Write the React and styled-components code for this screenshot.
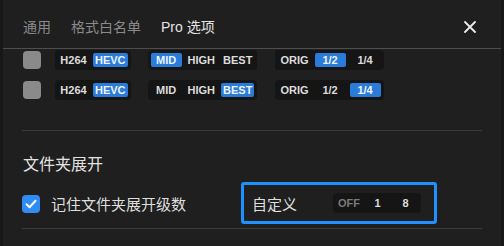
import React from "react";
import styled, { createGlobalStyle } from "styled-components";

const Global = createGlobalStyle`
  html, body { margin: 0; padding: 0; background: #171717; }
  body { font-family: "Liberation Sans", "Noto Sans CJK SC", sans-serif; }
  * { box-sizing: border-box; }
`;

const Page = styled.div`
  width: 504px;
  height: 246px;
  overflow: hidden;
  display: flex;
  padding-left: 3px;
  background: #171717;
`;

const Dialog = styled.div`
  width: 498px;
  height: 246px;
  background: #1f1f1f;
  display: flex;
  flex-direction: column;
  overflow: hidden;
`;

const Header = styled.div`
  height: 49px;
  flex: none;
  display: flex;
  align-items: center;
  padding: 6px 25px 0 20px;
  border-bottom: 1px solid #4e4e4e;
  gap: 20px;
`;

const Tab = styled.div`
  font-size: 14px;
  line-height: 20px;
  color: ${(p) => (p.$active ? "#e4e4e4" : "#8a8a8a")};
`;

const Close = styled.div`
  margin-left: auto;
  width: 12px;
  height: 12px;
  display: flex;
`;

const Content = styled.div`
  padding: 1px 19px 0 19px;
  display: flex;
  flex-direction: column;
`;

const Rows = styled.div`
  display: flex;
  flex-direction: column;
  gap: 10px;
`;

const Row = styled.div`
  height: 20px;
  display: flex;
  align-items: center;
  padding-left: 1px;
`;

const Box = styled.div`
  width: 18px;
  height: 18px;
  border-radius: 4px;
  flex: none;
  background: ${(p) => (p.$checked ? "#2f8cf5" : "#8a8a8a")};
  display: flex;
  align-items: center;
  justify-content: center;
`;

const Group = styled.div`
  display: flex;
  align-items: center;
  gap: ${(p) => p.$gap || 4}px;
  padding: 3px;
  height: 20px;
  background: #151515;
  border-radius: 4px;
  margin-left: ${(p) => p.$ml || 0}px;
`;

const Seg = styled.div`
  min-width: ${(p) => p.$w || 31}px;
  height: 14px;
  padding: 0 2px;
  border-radius: 2px;
  display: flex;
  align-items: center;
  justify-content: center;
  font-size: 11px;
  font-weight: 700;
  color: ${(p) => (p.$active ? "#eef5ff" : p.$dim ? "#7a7a7a" : "#dcdcdc")};
  background: ${(p) => (p.$active ? "#2b7cd8" : "transparent")};
`;

const Divider = styled.div`
  height: 1px;
  background: #3b3b3b;
  margin-top: ${(p) => p.$mt}px;
`;

const SectionTitle = styled.div`
  font-size: 16px;
  line-height: 22px;
  color: #e2e2e2;
  margin-top: 23px;
  padding-left: 1px;
`;

const OptionRow = styled.div`
  display: flex;
  align-items: center;
  margin-top: 6px;
`;

const CheckLabel = styled.label`
  width: 219px;
  display: flex;
  align-items: center;
  gap: 11px;
  font-size: 15px;
  color: #dedede;
  padding-top: 1px;
`;

const Highlight = styled.div`
  width: 196px;
  height: 42px;
  border: 3px solid #1e90ff;
  border-radius: 3px;
  display: flex;
  align-items: center;
  padding: 0 13px 0 8px;
`;

const FieldLabel = styled.span`
  font-size: 15px;
  color: #dedede;
`;

const Push = styled.div`
  margin-left: auto;
`;

const Check = () => (
  <svg width="12" height="10" viewBox="0 0 12 10">
    <path d="M1.5 5.2 L4.6 8.2 L10.5 1.8" fill="none" stroke="#fff" strokeWidth="2" strokeLinecap="round" strokeLinejoin="round" />
  </svg>
);

const X = () => (
  <svg width="12" height="12" viewBox="0 0 12 12">
    <path d="M1 1 L11 11 M11 1 L1 11" stroke="#ececec" strokeWidth="1.8" strokeLinecap="round" />
  </svg>
);

const rows = [
  { codec: 1, quality: 0, scale: 1 },
  { codec: 1, quality: 2, scale: 2 },
];

export default function App() {
  return (
    <>
      <Global />
      <Page>
        <Dialog>
          <Header>
            <Tab>通用</Tab>
            <Tab>格式白名单</Tab>
            <Tab $active>Pro 选项</Tab>
            <Close><X /></Close>
          </Header>
          <Content>
            <Rows>
              {rows.map((r, i) => (
                <Row key={i}>
                  <Box />
                  <Group $ml={14}>
                    {["H264", "HEVC"].map((t, j) => (
                      <Seg key={t} $active={r.codec === j}>{t}</Seg>
                    ))}
                  </Group>
                  <Group $ml={17}>
                    {["MID", "HIGH", "BEST"].map((t, j) => (
                      <Seg key={t} $active={r.quality === j}>{t}</Seg>
                    ))}
                  </Group>
                  <Group $ml={18}>
                    {["ORIG", "1/2", "1/4"].map((t, j) => (
                      <Seg key={t} $active={r.scale === j}>{t}</Seg>
                    ))}
                  </Group>
                </Row>
              ))}
            </Rows>
            <Divider $mt={30} />
            <SectionTitle>文件夹展开</SectionTitle>
            <OptionRow>
              <CheckLabel>
                <Box $checked><Check /></Box>
                记住文件夹展开级数
              </CheckLabel>
              <Highlight>
                <FieldLabel>自定义</FieldLabel>
                <Push>
                  <Group $gap={3}>
                    <Seg $w={25} $dim>OFF</Seg>
                    <Seg $w={25}>1</Seg>
                    <Seg $w={25}>8</Seg>
                  </Group>
                </Push>
              </Highlight>
            </OptionRow>
            <Divider $mt={4} />
          </Content>
        </Dialog>
      </Page>
    </>
  );
}
